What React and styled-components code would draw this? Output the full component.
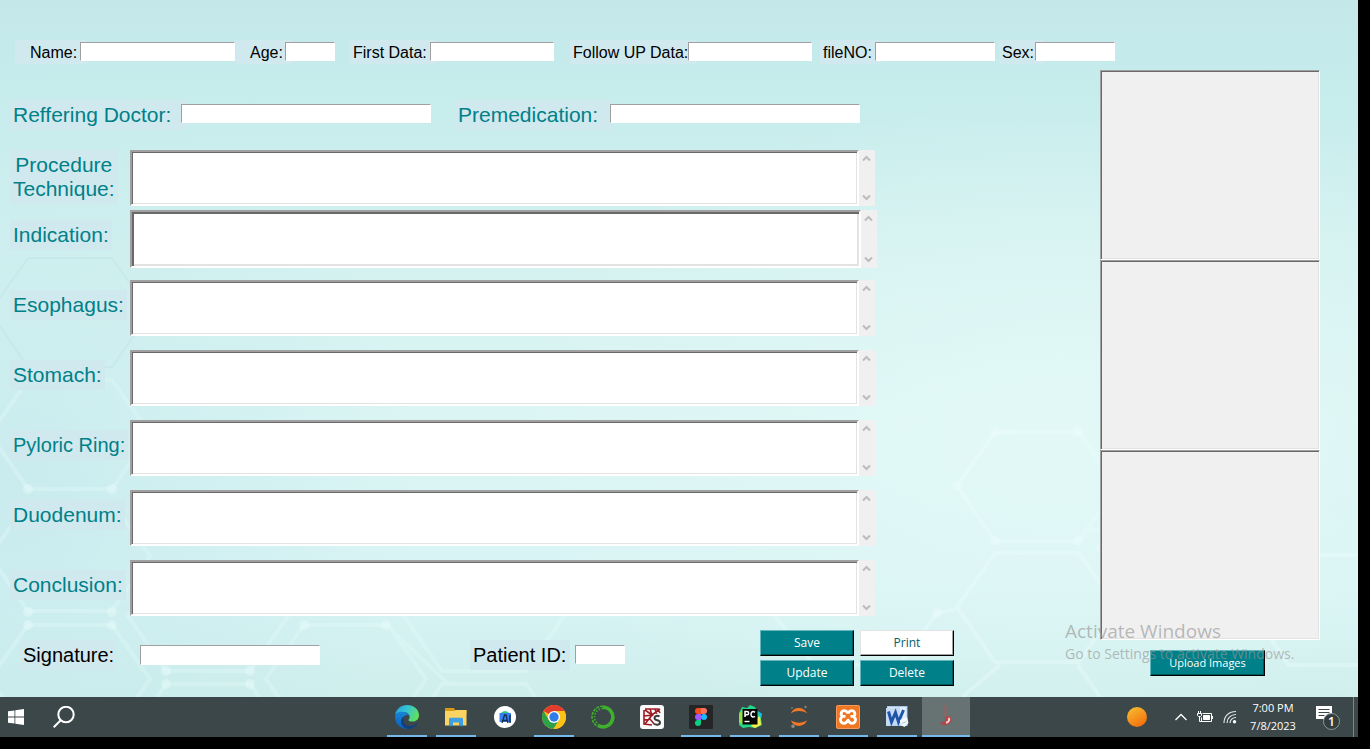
import React from 'react';
import styled, { createGlobalStyle } from 'styled-components';

const UI = '"Open Sans", "Noto Sans", sans-serif';
const ARIAL = '"Liberation Sans", Arial, sans-serif';

const GlobalStyle = createGlobalStyle`
  * { box-sizing: border-box; }
  body { margin: 0; background: #000; font-family: ${ARIAL}; }
  button, input, textarea { font: inherit; border-radius: 0; margin: 0; }
`;

const Screen = styled.div`
  display: flex;
  flex-direction: column;
  min-height: 100vh;
  padding: 0 12px 12px 0;
  background: #000;
`;

const Desktop = styled.main`
  position: relative;
  isolation: isolate;
  flex: 1;
  overflow: hidden;
  background:
    radial-gradient(ellipse 560px 340px at 78% 62%, rgba(228, 250, 247, 0.75), rgba(228, 250, 247, 0) 100%),
    radial-gradient(ellipse 420px 420px at 0% 70%, rgba(196, 233, 236, 0.8), rgba(196, 233, 236, 0) 100%),
    linear-gradient(180deg, #c4e8ea 0%, #c6ecec 14%, #d3f1f0 35%, #dbf5f4 60%, #d9f4f5 84%, #ceeeec 100%);
`;

const Backdrop = styled.svg`
  position: absolute;
  inset: 0;
  width: 100%;
  height: 100%;
  z-index: -1;
`;

const PatientBar = styled.div`
  display: flex;
  padding: 40px 0 6px 15px;
`;

const Field = styled.div`
  display: flex;
  align-items: flex-start;
  margin-left: ${(p) => p.$gap || 0}px;
`;

const Label = styled.label`
  flex: none;
  width: ${(p) => (p.$width ? `${p.$width}px` : 'auto')};
  height: 24px;
  padding-left: ${(p) => p.$indent || 3}px;
  background: #d0e9ee;
  color: #000;
  font-size: 16px;
  line-height: 26px;
  white-space: nowrap;
`;

const BigLabel = styled(Label)`
  height: 30px;
  padding: 0 3px;
  font-size: 20px;
  line-height: 30px;
`;

const TealLabel = styled(BigLabel)`
  color: #008088;
  font-size: ${(p) => (p.$compact ? 20 : 21)}px;
`;

const TextInput = styled.input.attrs({ type: 'text' })`
  flex: none;
  width: ${(p) => p.$width}px;
  height: ${(p) => (p.$tall ? 20 : 19)}px;
  margin: ${(p) => p.$top || 2}px 0 0 ${(p) => p.$shift || 0}px;
  padding: 0 2px;
  border: 1px solid #fff;
  border-top-color: #a0a0a0;
  border-left-color: #a0a0a0;
  background: #fff;
  outline: none;
`;

const Body = styled.div`
  display: flex;
  align-items: flex-start;
  padding-right: 38px;
`;

const Report = styled.div`
  flex: 1;
  min-width: 0;
  padding: 30px 0 0 10px;
`;

const DoctorRow = styled.div`
  display: flex;
  padding-bottom: 20px;
`;

const Section = styled.div`
  display: grid;
  grid-template-columns: 120px 1fr 16px;
  align-items: start;
  height: ${(p) => (p.$first ? 60 : 70)}px;
  padding-right: ${(p) => (p.$thick ? 223 : 225)}px;
`;

const SectionLabel = styled(TealLabel)`
  justify-self: start;
  margin-top: ${(p) => (p.$lines ? 0 : 10)}px;
  height: ${(p) => (p.$lines ? 54 : 30)}px;
  padding-top: ${(p) => (p.$lines ? 3 : 0)}px;
  line-height: ${(p) => (p.$lines ? 24 : 30)}px;
  text-align: center;
  white-space: pre-line;
`;

const Notes = styled.textarea`
  display: block;
  width: 100%;
  height: ${(p) => (p.$thick ? 58 : 56)}px;
  padding: 4px;
  border: 2px solid;
  border-color: #a0a0a0 #fff #fff #a0a0a0;
  box-shadow: ${(p) =>
    p.$thick
      ? 'inset 2px 2px 0 #696969, inset -2px -2px 0 #e3e3e3'
      : 'inset 1px 1px 0 #696969, inset -1px -1px 0 #e3e3e3'};
  background: #fff;
  resize: none;
  outline: none;
  overflow: hidden;
`;

const ScrollTrack = styled.div`
  display: flex;
  flex-direction: column;
  justify-content: space-between;
  height: ${(p) => (p.$thick ? 58 : 56)}px;
  background: #f0f0f0;
`;

const ScrollButton = styled.button`
  display: grid;
  place-items: center;
  width: 15px;
  height: 17px;
  padding: 0;
  border: 0;
  background: none;
`;

const Footer = styled.div`
  display: flex;
  align-items: flex-start;
  padding: 0 0 11px 10px;
`;

const FooterField = styled(Field)`
  padding-top: 10px;
`;

const Actions = styled.div`
  display: grid;
  grid-template-columns: 94px 94px;
  gap: 4px 6px;
  margin-left: 135px;
`;

const Button = styled.button`
  height: 26px;
  width: ${(p) => (p.$wide ? '115px' : 'auto')};
  padding: 0;
  border: 1px solid #000;
  border-top-color: ${(p) => (p.$light ? '#e3e3e3' : '#63b6bb')};
  border-left-color: ${(p) => (p.$light ? '#e3e3e3' : '#63b6bb')};
  box-shadow: inset -1px -1px 0 ${(p) => (p.$light ? '#a0a0a0' : '#00555a')};
  background: ${(p) => (p.$light ? '#fff' : '#008088')};
  color: ${(p) => (p.$light ? '#00606a' : '#fff')};
  font-family: ${UI};
  font-size: ${(p) => (p.$wide ? 11 : 12)}px;
  line-height: 24px;
`;

const Gallery = styled.div`
  flex: none;
  width: 220px;
`;

const Frame = styled.div`
  height: 190px;
  border: 1px solid;
  border-color: #a0a0a0 #fff #fff #a0a0a0;
  box-shadow: inset 1px 1px 0 #696969, inset -1px -1px 0 #e3e3e3;
  background: #f0f0f0;
`;

const UploadRow = styled.div`
  padding: 10px 0 0 50px;
`;

const Watermark = styled.div`
  position: absolute;
  right: 57px;
  bottom: 33px;
  width: 236px;
  color: rgba(150, 150, 150, 0.65);
  font-family: ${UI};
  white-space: nowrap;
  pointer-events: none;
`;

const WatermarkTitle = styled.div`
  font-size: 19px;
  line-height: 26px;
`;

const WatermarkText = styled.div`
  font-size: 14px;
  line-height: 20px;
`;

const Taskbar = styled.nav`
  display: grid;
  grid-template-columns: 1fr auto 1fr;
  height: 40px;
  background: #3b4748;
  color: #fff;
`;

const StartGroup = styled.div`
  display: flex;
`;

const Apps = styled.div`
  display: flex;
  gap: 1px;
  padding-right: 6px;
`;

const TaskButton = styled.button`
  display: grid;
  place-items: center;
  width: ${(p) => p.$width || 48}px;
  height: 40px;
  padding: 0;
  border: 0;
  color: #fff;
  background:
    linear-gradient(#76b9ed, #76b9ed) bottom / ${(p) => (p.$active ? 48 : p.$open ? 40 : 0)}px 2px no-repeat,
    ${(p) => (p.$active ? '#677272' : 'transparent')};
`;

const Tray = styled.div`
  display: flex;
  justify-content: flex-end;
  align-items: center;
  padding-right: 4px;
`;

const Clock = styled.div`
  width: 60px;
  text-align: center;
  font-family: ${UI};
  font-size: 11px;
  line-height: 18px;
`;

const ShowDesktop = styled.div`
  align-self: stretch;
  width: 1px;
  background: #7e8788;
`;

const Arrow = ({ up }) => (
  <svg width="9" height="7" viewBox="0 0 9 7" aria-hidden="true">
    <path d={up ? 'M1 5.500 4.500 2 8 5.500' : 'M1 1.500 4.500 5 8 1.500'} fill="none" stroke="#bcbcbc" strokeWidth="2" />
  </svg>
);

const hex = (x, y) =>
  `M${x} ${y}h84l38 54-38 55h-84l-38-55z`;

const Molecules = () => (
  <Backdrop viewBox="0 0 1358 697" preserveAspectRatio="xMidYMid slice" aria-hidden="true">
    <g fill="none" stroke="#edfffe" strokeWidth="4" opacity="0.35">
      <path d={hex(995, 432)} />
      <path d={hex(995, 553)} />
      <path d={hex(1136, 494)} />
      <path d="M957 609l-20 4-38 52h-85l-40-50 40-54" />
      <path d="M1078 541l12-12 36 6M1358 555h-70l-36 54 36 56h70" />
      <path d="M1000 665l-38 32M1078 665l22 32" />
    </g>
    <g fill="none" stroke="#e4fbfb" strokeWidth="4" opacity="0.35">
      <path d={hex(28, 380)} />
      <path d={hex(28, 502)} />
      <path d={hex(28, 625)} />
      <path d={hex(166, 562)} />
      <path d={hex(166, 684)} />
      <path d={hex(304, 625)} />
      <path d={hex(442, 562)} />
      <path d={hex(442, 684)} />
      <path d="M386 625l64 60" />
    </g>
    <g fill="none" stroke="#b9dfe1" strokeWidth="2" opacity="0.3">
      <path d={hex(28, 258)} />
    </g>
    <g fill="#effffe" opacity="0.35">
      {[[995, 432], [1078, 432], [957, 486], [995, 541], [1078, 541], [937, 613], [28, 489], [112, 489], [28, 612], [112, 612], [28, 625], [112, 625], [166, 671], [250, 671], [166, 684], [250, 684], [304, 625], [386, 625]].map(([x, y]) => (
        <circle key={`${x}-${y}`} cx={x} cy={y} r="5" />
      ))}
    </g>
  </Backdrop>
);

const Icon = ({ children, size = 24 }) => (
  <svg width={size} height={size} viewBox="0 0 24 24" aria-hidden="true">{children}</svg>
);

const EdgeIcon = () => (
  <Icon>
    <defs>
      <linearGradient id="edgeTop" x1="0" x2="1" y1="0.1" y2="0.5">
        <stop offset="0" stopColor="#249fe0" />
        <stop offset="0.5" stopColor="#36c6d0" />
        <stop offset="1" stopColor="#61df5d" />
      </linearGradient>
      <linearGradient id="edgeLow" x1="0" x2="0" y1="0" y2="1">
        <stop offset="0" stopColor="#1686d8" />
        <stop offset="1" stopColor="#0c60b6" />
      </linearGradient>
    </defs>
    <path d="M0.2 10C1 4 6 0 12 0c7 0 12 4.800 12 10.300 0 4-3 6.300-6.500 6.300-2.500 0-4-.8-4-1.700 0-.6 1.100-1.200 1.100-3 0-2.700-2.600-5-6.300-5C4.500 6.900 1.500 8 .2 10z" fill="url(#edgeTop)" />
    <path d="M0.100 12C.3 8 4 6.600 7.800 6.800c3.500.2 6.200 2 6.700 4.400-1-1-2.200-1.500-3.300-1.300C9 11 7.500 13 7.700 15.600c.2 4 3.700 6.500 7.300 7.900C7.500 25.400 0 20 0.100 12z" fill="url(#edgeLow)" />
    <path d="M9.300 11.300c-2 3.200-.9 8 3.200 9.400 3.300 1.100 6.700-.2 9.200-2.200.6-.4 1 .1.700.6-2 3-5.300 4.800-8.800 4.900-5-.8-8-4.500-7.600-8.100.2-2 1.400-3.800 3.300-4.600z" fill="#123f80" />
  </Icon>
);

const FolderIcon = () => (
  <Icon>
    <path d="M1 3h9l1 2h11.500v4H1z" fill="#d89b13" />
    <path d="M1 6h9l2-1h10.500v15.500H1z" fill="#fbd363" />
    <path d="M5 20.500v-6.700l1-1h12l1 1v6.700h-4v-3H9v3z" fill="#3f9fe5" />
    <path d="M5 20.500h4v1H5zM15 20.500h4v1h-4z" fill="#2472b5" />
  </Icon>
);

const StudioIcon = () => (
  <Icon>
    <circle cx="12" cy="12" r="11" fill="#fff" />
    <path d="M7.500 8.500a5 4.500 0 0 1 9 0z" fill="#37c77d" />
    <rect x="6.500" y="8" width="11.500" height="9" fill="#3482ef" />
    <path d="M9 18l2.500-8h1.500l2 8M10 15.500h4" stroke="#1a2e4a" strokeWidth="1.300" fill="none" />
    <path d="M17 10v8" stroke="#1a2e4a" strokeWidth="1.500" />
  </Icon>
);

const ChromeIcon = () => (
  <Icon>
    <circle cx="12" cy="12" r="12" fill="#fbc116" />
    <path d="M12 12L1.600 6A12 12 0 0 1 22.400 6H12z" fill="#e33b2e" />
    <path d="M1.600 6A12 12 0 0 0 11.500 24l5.700-9L12 12 6.800 15z" fill="#2da14c" />
    <path d="M12 6h10.400A12 12 0 0 1 11.500 24l5.700-9z" fill="#fbc116" />
    <circle cx="12" cy="12" r="6" fill="#fff" />
    <circle cx="12" cy="12" r="4.700" fill="#2f7de9" />
  </Icon>
);

const AnacondaIcon = () => (
  <Icon>
    <path d="M12 2.200a9.800 9.800 0 1 1-5 18.200" fill="none" stroke="#3eb02b" strokeWidth="3.600" />
    <path d="M12 1.200A10.800 10.800 0 0 0 6.500 21.400" fill="none" stroke="#3eb02b" strokeWidth="1.600" strokeDasharray="3 1" />
    <path d="M12 3.500A8.500 8.500 0 0 0 7.500 19.200" fill="none" stroke="#3eb02b" strokeWidth="1.600" strokeDasharray="1.500 1.500" />
  </Icon>
);

const SpyderIcon = () => (
  <Icon>
    <rect width="24" height="24" rx="3" fill="#fafafa" />
    <path d="M5 4h13l2 4M4 5v14l8 1M4 11l8-1 8-6M10 4l2 6-7 9M5 5l7 5 4 2M15 4l2 6M4 15l6-1 5 6" fill="none" stroke="#9d1c24" strokeWidth="1.600" />
    <path d="M19.500 11.500c-2-1.300-5-.7-5 1.500 0 3 5.500 1.500 5.500 4.500 0 2.600-4 2.800-6 1.300" fill="none" stroke="#fafafa" strokeWidth="4" />
    <path d="M19.500 11.500c-2-1.300-5-.7-5 1.500 0 3 5.500 1.500 5.500 4.500 0 2.600-4 2.800-6 1.300" fill="none" stroke="#3c3c3c" strokeWidth="2" />
  </Icon>
);

const FigmaIcon = () => (
  <Icon>
    <rect width="24" height="24" rx="1" fill="#252528" />
    <path d="M12 3H9a3 3 0 0 0 0 6h3z" fill="#f24e1e" />
    <path d="M12 3h3a3 3 0 0 1 0 6h-3z" fill="#ff7262" />
    <path d="M12 9H9a3 3 0 0 0 0 6h3z" fill="#a259ff" />
    <circle cx="15" cy="12" r="3" fill="#1abcfe" />
    <path d="M12 15H9a3 3 0 1 0 3 3z" fill="#0acf83" />
  </Icon>
);

const PyCharmIcon = () => (
  <Icon>
    <path d="M1 8l3-6 5 1 3-3 5 2 2 4 5 3-1 5 1 6-7 3-6-1-6 1-4-3z" fill="#21d789" />
    <path d="M13 21l9-11 1 10-6 3z" fill="#f7ee46" />
    <path d="M20 6l4 3-2 4z" fill="#19b8f0" />
    <path d="M1 9l4-5v16l-4-3z" fill="#8fe04a" />
    <rect x="4.500" y="4" width="15" height="15.500" fill="#060606" />
    <path d="M7 12V6.500h2a1.600 1.600 0 0 1 0 3.300H7M17 7.300c-2-1.400-4-.6-4 2s2 3.300 4 2" fill="none" stroke="#fff" strokeWidth="1.500" />
    <path d="M6.500 16.500h5" stroke="#fff" strokeWidth="1.400" />
  </Icon>
);

const JupyterIcon = () => (
  <Icon>
    <path d="M4 8.500C6 1 17.500 1 20 8.500 15.500 5.300 8.500 5.300 4 8.500zM4 15.300c2 7.500 13.500 7.500 16 0-4.500 3.200-11.500 3.200-16 0z" fill="#f37726" />
    <circle cx="18.500" cy="2" r="1.200" fill="#858585" />
    <circle cx="5" cy="3" r="1" fill="#747474" />
    <circle cx="6" cy="21.200" r="1.700" fill="#8d8d8d" />
  </Icon>
);

const XamppIcon = () => (
  <Icon>
    <rect width="24" height="24" rx="2" fill="#f07722" />
    <rect x="0.500" y="0.500" width="23" height="23" rx="2" fill="none" stroke="#f39a5c" />
    <path
      d="M12 8.500C11 6.300 9.800 5.700 8.300 5.700c-3 0-4.300 3.600-2 5.600h3.200M6.300 11.700c-3.300 2.300-1.600 6.600 1.500 6.600 2.200 0 3.200-1 4.200-3.200 1 2.200 2 3.200 4.200 3.200 3.100 0 4.800-4.300 1.500-6.600M12 8.500c1-2.200 2.200-2.800 3.700-2.800 3 0 4.300 3.600 2 5.600h-3.200"
      fill="none"
      stroke="#fff"
      strokeWidth="2.800"
      strokeLinejoin="round"
    />
  </Icon>
);

const WordIcon = () => (
  <Icon>
    <path d="M2 1h20.500v20H2z" fill="#a9c8ee" />
    <path d="M3 2h18.500v17H3z" fill="#e3eefb" />
    <path d="M1 3l14-1v18L1 21z" fill="#c4daf5" />
    <path d="M3.500 6.500 6.500 17 10.500 7.500l3 9.500L18.500 5" fill="none" stroke="#1f55a8" strokeWidth="3" />
    <path d="M15 15l7-3 1.500 6-4 4-4-2z" fill="#f4f8fe" />
    <path d="M16.500 18.500l5-2" stroke="#b3cae9" />
  </Icon>
);

const StomachIcon = () => (
  <Icon>
    <path d="M11 0c.8 3 .3 8 .5 12" fill="none" stroke="#b95355" strokeWidth="1.600" />
    <path d="M11 12l3-1c3 0 3.800 3 3 5.500-1 3-5 4.500-9 3l-1 1c-1-2 0-3.500 2-3.500 2-.3 3-2 2-5z" fill="#b4464a" />
    <path d="M14.500 13c1.500 1.500.5 4-2.500 4.700" fill="none" stroke="#f3d6d4" strokeWidth="2" />
  </Icon>
);

const apps = [
  { name: 'Microsoft Edge', icon: EdgeIcon, open: true },
  { name: 'File Explorer', icon: FolderIcon, open: true },
  { name: 'Android Studio', icon: StudioIcon },
  { name: 'Google Chrome', icon: ChromeIcon, open: true },
  { name: 'Anaconda', icon: AnacondaIcon },
  { name: 'Spyder', icon: SpyderIcon },
  { name: 'Figma', icon: FigmaIcon, open: true },
  { name: 'PyCharm', icon: PyCharmIcon, open: true },
  { name: 'Jupyter', icon: JupyterIcon, open: true },
  { name: 'XAMPP', icon: XamppIcon, open: true },
  { name: 'Word', icon: WordIcon, open: true },
  { name: 'Endoscopy report', icon: StomachIcon, active: true },
];

const patientFields = [
  { id: 'name', label: 'Name:', labelWidth: 72, indent: 15, width: 155, shift: -7 },
  { id: 'age', label: 'Age:', labelWidth: 58, indent: 15, width: 50, shift: -8 },
  { id: 'first', label: 'First Data:', labelWidth: 87, width: 124, shift: -7, gap: 15 },
  { id: 'follow', label: 'Follow UP Data:', labelWidth: 126, width: 124, shift: -8, gap: 16 },
  { id: 'file', label: 'fileNO:', labelWidth: 61, width: 120, shift: -6, gap: 8 },
  { id: 'sex', label: 'Sex:', labelWidth: 44, width: 80, shift: -8, gap: 4 },
];

const sections = [
  { id: 'procedure', label: 'Procedure\nTechnique:', lines: true },
  { id: 'indication', label: 'Indication:', thick: true },
  { id: 'esophagus', label: 'Esophagus:' },
  { id: 'stomach', label: 'Stomach:' },
  { id: 'pyloric', label: 'Pyloric Ring:', compact: true },
  { id: 'duodenum', label: 'Duodenum:' },
  { id: 'conclusion', label: 'Conclusion:' },
];

export default function App() {
  return (
    <Screen>
      <GlobalStyle />
      <Desktop>
        <Molecules />
        <PatientBar>
          {patientFields.map((f) => (
            <Field key={f.id} $gap={f.gap}>
              <Label htmlFor={f.id} $width={f.labelWidth} $indent={f.indent}>{f.label}</Label>
              <TextInput id={f.id} $width={f.width} $shift={f.shift} />
            </Field>
          ))}
        </PatientBar>
        <Body>
          <Report>
            <DoctorRow>
              <Field>
                <TealLabel htmlFor="doctor" $width={178}>Reffering Doctor:</TealLabel>
                <TextInput id="doctor" $width={250} $top={4} $shift={-7} />
              </Field>
              <Field $gap={24}>
                <TealLabel htmlFor="premedication" $width={157}>Premedication:</TealLabel>
                <TextInput id="premedication" $width={250} $top={4} $shift={-2} />
              </Field>
            </DoctorRow>
            {sections.map((s) => (
              <Section key={s.id} $first={s.lines} $thick={s.thick}>
                <SectionLabel htmlFor={s.id} $lines={s.lines} $compact={s.compact}>{s.label}</SectionLabel>
                <Notes id={s.id} $thick={s.thick} />
                <ScrollTrack $thick={s.thick}>
                  <ScrollButton type="button" aria-label="Scroll up"><Arrow up /></ScrollButton>
                  <ScrollButton type="button" aria-label="Scroll down"><Arrow /></ScrollButton>
                </ScrollTrack>
              </Section>
            ))}
            <Footer>
              <FooterField>
                <BigLabel htmlFor="signature" $width={95}>Signature:</BigLabel>
                <TextInput id="signature" $width={180} $top={5} $shift={25} $tall />
              </FooterField>
              <FooterField $gap={150}>
                <BigLabel htmlFor="patient-id" $width={100}>Patient ID:</BigLabel>
                <TextInput id="patient-id" $width={50} $top={5} $shift={5} />
              </FooterField>
              <Actions>
                <Button type="button">Save</Button>
                <Button type="button" $light>Print</Button>
                <Button type="button">Update</Button>
                <Button type="button">Delete</Button>
              </Actions>
            </Footer>
          </Report>
          <Gallery>
            <Frame />
            <Frame />
            <Frame />
            <UploadRow>
              <Button type="button" $wide>Upload Images</Button>
            </UploadRow>
          </Gallery>
        </Body>
        <Watermark>
          <WatermarkTitle>Activate Windows</WatermarkTitle>
          <WatermarkText>Go to Settings to activate Windows.</WatermarkText>
        </Watermark>
      </Desktop>
      <Taskbar>
        <StartGroup>
          <TaskButton type="button" aria-label="Start" $width={32}>
            <svg width="16" height="16" viewBox="0 0 16 16" fill="#fff" aria-hidden="true">
              <path d="M0 2.300 6.500 1.400v6.200H0zM7.300 1.300 16 0v7.600H7.300zM0 8.400h6.500v6.200L0 13.700zM7.300 8.400H16V16l-8.700-1.300z" />
            </svg>
          </TaskButton>
          <TaskButton type="button" aria-label="Search" $width={64}>
            <svg width="22" height="22" viewBox="0 0 22 22" fill="none" stroke="#fff" strokeWidth="2" aria-hidden="true">
              <circle cx="13" cy="8.500" r="7.700" />
              <path d="M7.500 14.500.7 21.300" />
            </svg>
          </TaskButton>
        </StartGroup>
        <Apps>
          {apps.map(({ name, icon: AppIcon, open, active }) => (
            <TaskButton type="button" key={name} aria-label={name} $open={open} $active={active}>
              <AppIcon />
            </TaskButton>
          ))}
        </Apps>
        <Tray>
          <TaskButton type="button" aria-label="Weather" $width={64}>
            <svg width="20" height="20" viewBox="0 0 20 20" aria-hidden="true">
              <defs>
                <linearGradient id="sun" x1="0.2" x2="0.8" y1="0" y2="1">
                  <stop offset="0" stopColor="#f8bb31" />
                  <stop offset="1" stopColor="#f26a0b" />
                </linearGradient>
              </defs>
              <circle cx="10" cy="10" r="10" fill="url(#sun)" />
            </svg>
          </TaskButton>
          <TaskButton type="button" aria-label="Hidden icons" $width={24}>
            <svg width="12" height="8" viewBox="0 0 12 8" fill="none" stroke="#fff" strokeWidth="1.300" aria-hidden="true">
              <path d="M.5 7 6 1.500 11.500 7" />
            </svg>
          </TaskButton>
          <TaskButton type="button" aria-label="Battery" $width={24}>
            <svg width="16" height="12" viewBox="0 0 16 12" fill="none" stroke="#fff" aria-hidden="true">
              <path d="M5.500 2.500h9v8h-10v-4M15.500 5v3M1.500 0v2M3.500 0v2M.5 2.500h4v2l-1 1h-2l-1-1zM2.500 6v4.500h2" />
              <path d="M6.500 4.500h6v4h-6z" fill="#fff" />
            </svg>
          </TaskButton>
          <TaskButton type="button" aria-label="Network" $width={26}>
            <svg width="14" height="14" viewBox="0 0 14 14" fill="none" stroke="#e4e8e8" strokeWidth="1.200" aria-hidden="true">
              <path d="M1 13C1 6 6 1.500 13 1.500M4 13c0-5 4-8.500 9-8.500M7 13c0-3 2.500-5.500 6-5.500" />
              <circle cx="11.500" cy="11.700" r="1.700" fill="#fff" stroke="none" />
            </svg>
          </TaskButton>
          <Clock>
            <div>7:00 PM</div>
            <div>7/8/2023</div>
          </Clock>
          <TaskButton type="button" aria-label="Notifications" $width={50}>
            <svg width="26" height="26" viewBox="0 0 26 26" aria-hidden="true">
              <path d="M1 2h16v13h-5v4l-4-4H1z" fill="#fff" />
              <path d="M3.500 5.500h11M3.500 8.500h11M3.500 11.500h6" stroke="#3b4748" />
              <circle cx="16.500" cy="17.500" r="8" fill="#333d3e" stroke="#909798" />
              <text x="16.500" y="22" textAnchor="middle" fill="#fff" fontFamily="Open Sans, sans-serif" fontSize="12" fontWeight="600">1</text>
            </svg>
          </TaskButton>
          <ShowDesktop />
        </Tray>
      </Taskbar>
    </Screen>
  );
}
